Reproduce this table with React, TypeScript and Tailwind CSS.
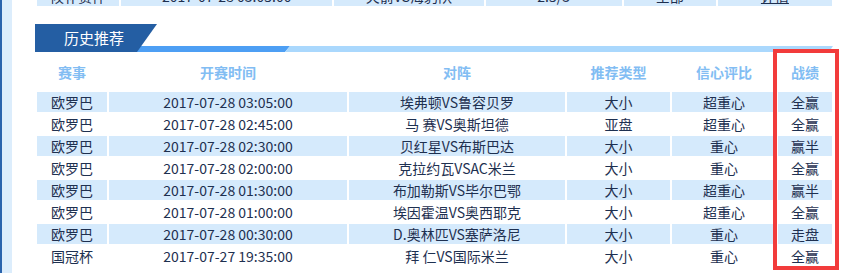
const PREV_ROW = [
  { w: "w-[82px]", text: "候补赛件" },
  { w: "w-[211px]", text: "2017-07-28 03:05:00" },
  { w: "w-[149px]", text: "火箭VS海豹队" },
  { w: "w-[136px]", text: "2.5/3" },
  { w: "w-[92px]", text: "全部" },
  { w: "w-[114px]", text: "详情", link: true },
];

const COLS = [
  { label: "赛事", w: "w-[70px]" },
  { label: "开赛时间", w: "w-[238px]" },
  { label: "对阵", w: "w-[216px]" },
  { label: "推荐类型", w: "w-[103px]" },
  { label: "信心评比", w: "w-[104px]" },
  { label: "战绩", w: "w-[54px]" },
];

const ROWS: string[][] = [
  ["欧罗巴", "2017-07-28 03:05:00", "埃弗顿VS鲁容贝罗", "大小", "超重心", "全赢"],
  ["欧罗巴", "2017-07-28 02:45:00", "马 赛VS奥斯坦德", "亚盘", "超重心", "全赢"],
  ["欧罗巴", "2017-07-28 02:30:00", "贝红星VS布斯巴达", "大小", "重心", "赢半"],
  ["欧罗巴", "2017-07-28 02:00:00", "克拉约瓦VSAC米兰", "大小", "重心", "全赢"],
  ["欧罗巴", "2017-07-28 01:30:00", "布加勒斯VS毕尔巴鄂", "大小", "超重心", "赢半"],
  ["欧罗巴", "2017-07-28 01:00:00", "埃因霍温VS奥西耶克", "大小", "超重心", "全赢"],
  ["欧罗巴", "2017-07-28 00:30:00", "D.奥林匹VS塞萨洛尼", "大小", "重心", "走盘"],
  ["国冠杯", "2017-07-27 19:35:00", "拜 仁VS国际米兰", "大小", "重心", "全赢"],
];

function TitleBar({ title }: { title: string }) {
  return (
    <div className="flex h-[28px] w-[798px] items-end">
      <div className="relative z-10 flex h-full w-[122px] shrink-0 items-center bg-[#245ea3] pl-[29px] text-[15px] text-white [clip-path:polygon(0_0,100%_0,calc(100%-20px)_100%,0_100%)]">
        {title}
      </div>
      <div className="-ml-[20px] flex h-[6px] flex-1">
        <div className="h-full w-[153px] shrink-0 bg-[#4d9ff4] [clip-path:polygon(0_0,100%_0,calc(100%-5px)_100%,0_100%)]" />
        <div className="-ml-[5px] h-full flex-1 bg-[#aad8fd] [clip-path:polygon(5px_0,100%_0,calc(100%-4px)_100%,0_100%)]" />
      </div>
    </div>
  );
}

export default function App() {
  return (
    <div className="flex h-[273px] w-[853px] overflow-hidden bg-white font-['Noto_Sans_CJK_SC',sans-serif] text-[14px] text-[#1e3050]">
      <div className="w-[12px] shrink-0 border-l-2 border-[#2a64ad] bg-[#dcedfc]" />

      <div className="relative flex flex-col pl-[23px]">
        {/* previous table, scrolled mostly out of view */}
        <table className="-mt-[16px] border-separate border-spacing-[2px]">
          <tbody>
            <tr className="h-[20px]">
              {PREV_ROW.map((c) => (
                <td
                  key={c.text}
                  className={`${c.w} bg-[#d5eafc] p-0 text-center leading-[20px]`}
                >
                  {c.link ? <span className="underline">{c.text}</span> : c.text}
                </td>
              ))}
            </tr>
          </tbody>
        </table>

        <div className="mt-[16px]">
          <TitleBar title="历史推荐" />
        </div>

        <table className="border-separate border-spacing-[2px]">
          <thead>
            <tr className="h-[36px]">
              {COLS.map((c) => (
                <th
                  key={c.label}
                  className={`${c.w} p-0 text-center text-[14px] font-bold text-[#82bdf3]`}
                >
                  {c.label}
                </th>
              ))}
            </tr>
          </thead>
          <tbody>
            {ROWS.map((r, i) => (
              <tr key={i} className="h-[20px]">
                {r.map((v, j) => (
                  <td
                    key={j}
                    className={`p-0 text-center leading-[20px] whitespace-pre ${
                      i % 2 === 0 ? "bg-[#d5eafc]" : ""
                    }`}
                  >
                    {v}
                  </td>
                ))}
              </tr>
            ))}
          </tbody>
        </table>

        {/* highlight box around the 战绩 column */}
        <div className="absolute top-[49px] left-[761px] h-[221px] w-[66px] border-4 border-[#f23b3b]" />
      </div>
    </div>
  );
}
